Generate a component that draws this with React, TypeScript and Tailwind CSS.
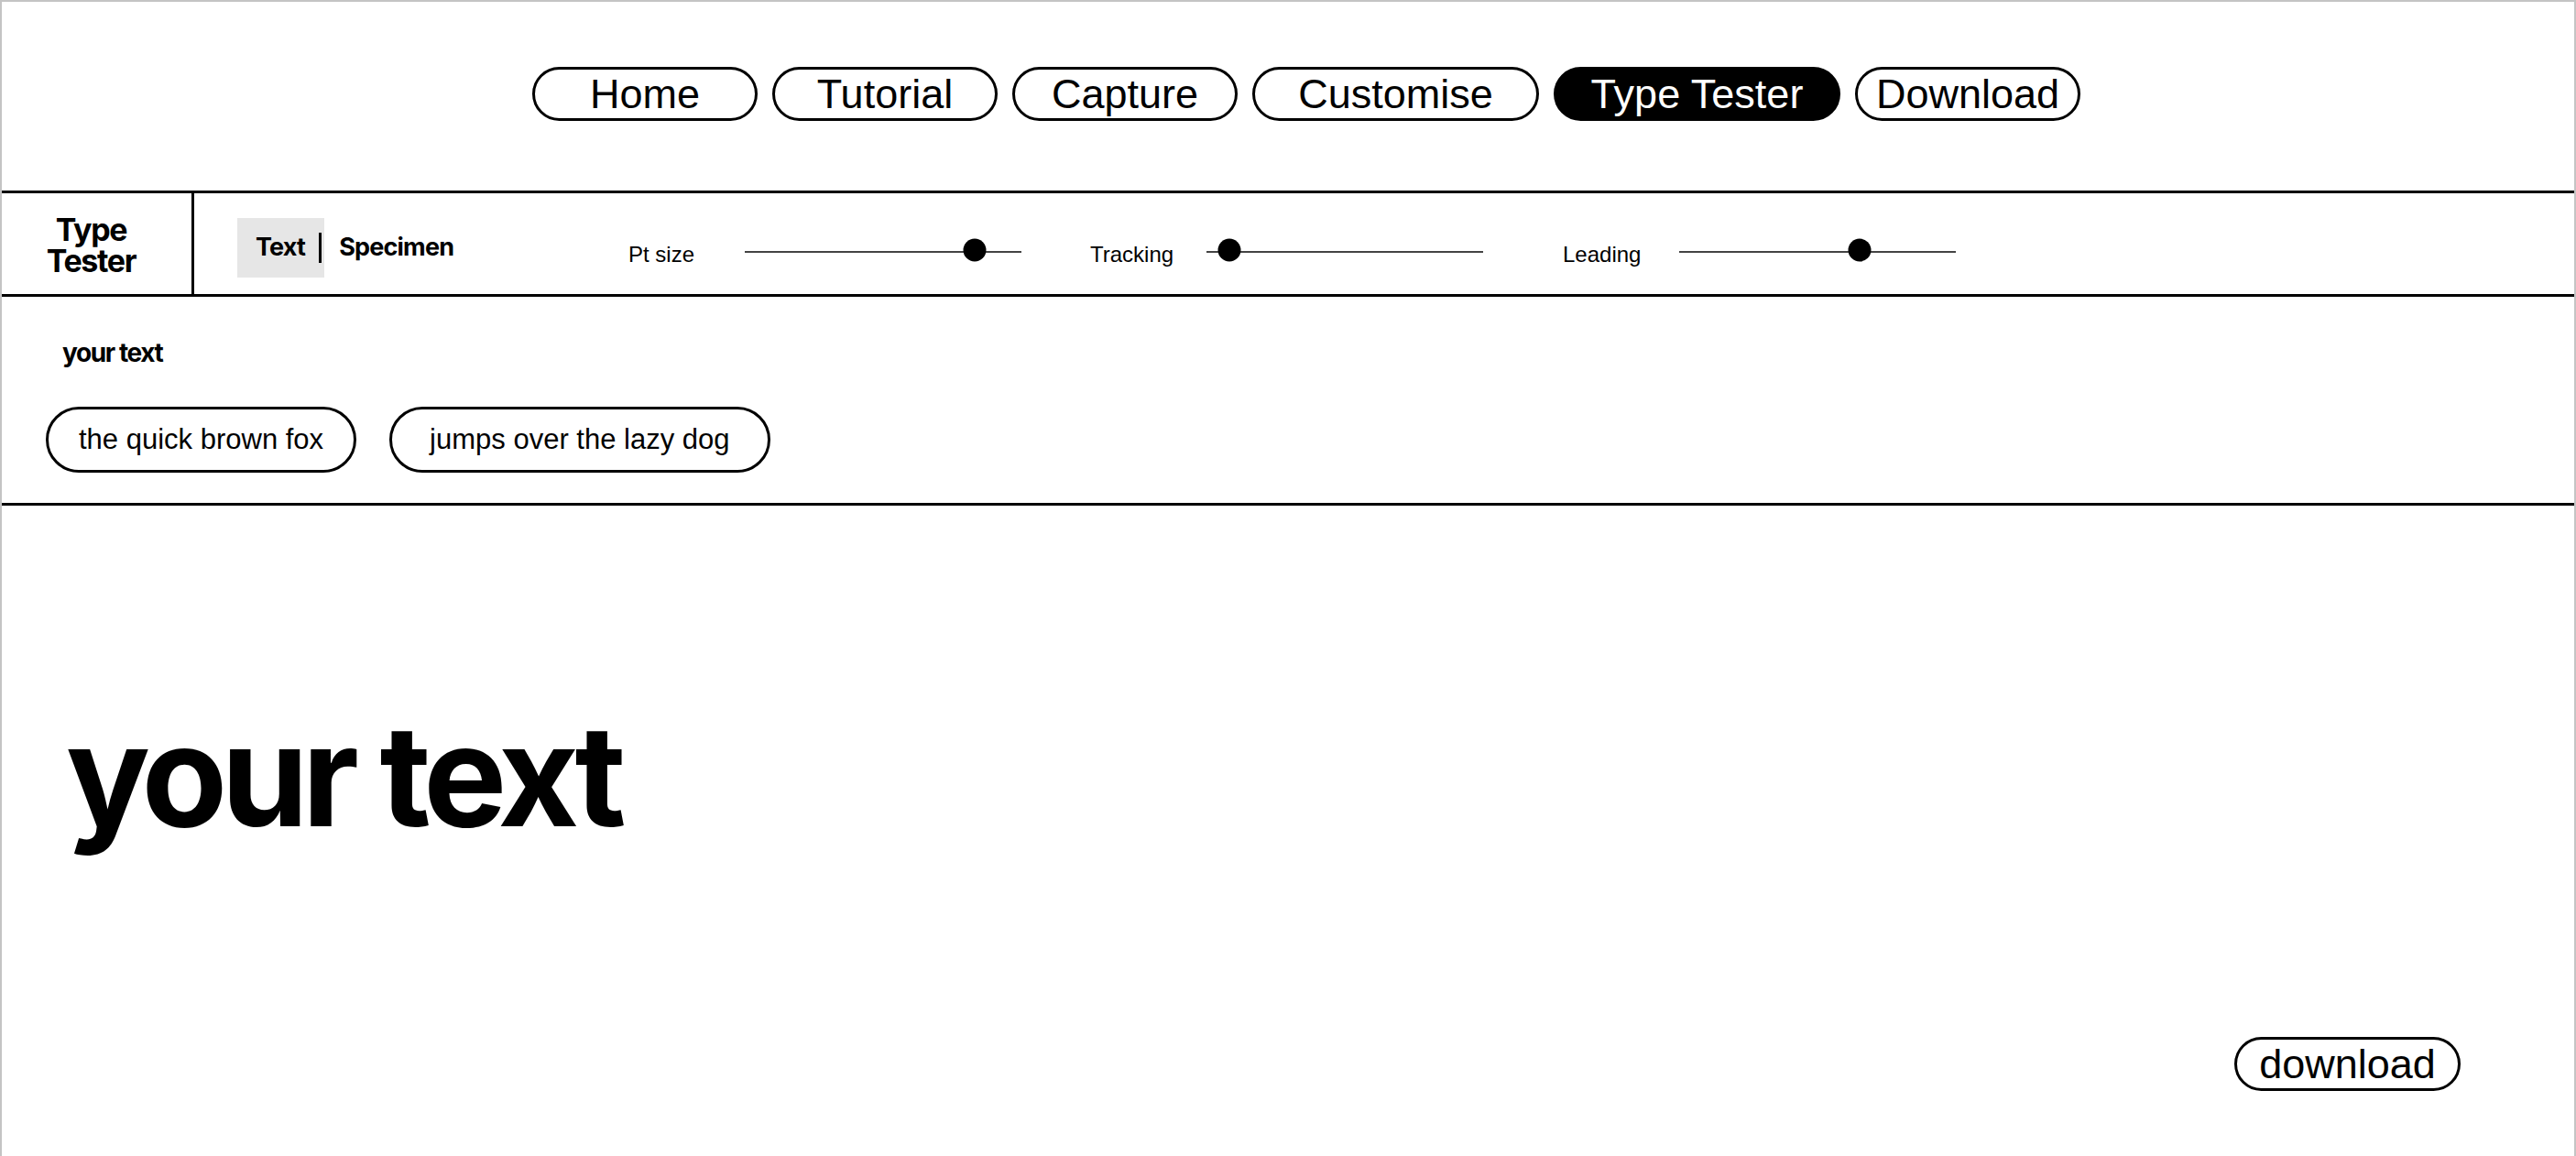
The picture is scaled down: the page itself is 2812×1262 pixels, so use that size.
import React from "react";

const navItems = [
  { label: "Home", wide: false },
  { label: "Tutorial", wide: false },
  { label: "Capture", wide: false },
  { label: "Customise", wide: true },
  { label: "Type Tester", wide: true, active: true },
  { label: "Download", wide: false },
];

const sliders = [
  { label: "Pt size", thumb: 251, gap: "ml-0" },
  { label: "Tracking", thumb: 25, gap: "ml-[75px]" },
  { label: "Leading", thumb: 197, gap: "ml-[87px]" },
];

function Slider({ label, thumb, gap }: { label: string; thumb: number; gap: string }) {
  return (
    <div className={`mt-[9px] flex items-center ${gap}`}>
      <span className="w-[127px] pt-[6px] text-[24px] leading-none font-['Liberation_Sans',Arial,sans-serif]">
        {label}
      </span>
      <div className="relative h-[2px] w-[302px] bg-[#444]">
        {/* thumb */}
        <div
          className="absolute top-1/2 h-[25px] w-[25px] -translate-x-1/2 -translate-y-[58%] rounded-full bg-black"
          style={{ left: thumb }}
        />
      </div>
    </div>
  );
}

export default function App() {
  return (
    <div className="flex h-screen flex-col overflow-hidden border-2 border-b-0 border-[#c4c4c4] bg-white text-black">
      {/* Top navigation */}
      <nav className="flex h-[209px] shrink-0 items-center justify-center gap-4 border-b-[3px] border-black pb-[5px] pl-[40px] font-['Liberation_Sans',Arial,sans-serif]">
        {navItems.map((item) => (
          <button
            key={item.label}
            className={`flex h-[59px] items-center justify-center rounded-full border-[3px] border-black text-[45px] leading-none ${
              item.wide ? "w-[313px]" : "w-[246px]"
            } ${item.active ? "bg-black text-white" : "bg-white text-black"}`}
          >
            {item.label}
          </button>
        ))}
      </nav>

      {/* Toolbar */}
      <div className="flex h-[113px] shrink-0 border-b-[3px] border-black font-['Inter',sans-serif]">
        <div className="flex w-[210px] shrink-0 items-center justify-center border-r-[3px] border-black pr-[12px] pt-[4px]">
          <h1 className="text-center text-[34px] font-bold leading-[34px] tracking-[-0.04em]">
            Type
            <br />
            Tester
          </h1>
        </div>
        <div className="flex items-center pl-[47px] pt-[8px]">
          <div className="flex w-[427px] items-center">
            <div className="flex h-[65px] items-center bg-[#e6e6e6] pl-[20px] pr-[3px]">
              <span className="text-[27px] font-bold tracking-[-0.03em]">Text</span>
              <span className="ml-[15px] h-[33px] w-[3px] bg-black" />
            </div>
            <span className="ml-[16px] text-[27px] font-bold tracking-[-0.03em]">Specimen</span>
          </div>
          {sliders.map((s) => (
            <Slider key={s.label} {...s} />
          ))}
        </div>
      </div>

      {/* Text presets */}
      <div className="h-[228px] shrink-0 border-b-[3px] border-black px-[48px] pt-[45px]">
        <p className="ml-[18px] font-['Inter',sans-serif] text-[28px] font-bold leading-[32px] tracking-[-0.05em]">
          your text
        </p>
        <div className="mt-[43px] flex gap-[36px] font-['Liberation_Sans',Arial,sans-serif]">
          <button className="flex h-[72px] items-center rounded-full border-[3px] border-black px-[33px] text-[31px]">
            the quick brown fox
          </button>
          <button className="flex h-[72px] items-center rounded-full border-[3px] border-black px-[41px] text-[31px]">
            jumps over the lazy dog
          </button>
        </div>
      </div>

      {/* Preview */}
      <div className="flex flex-1 flex-col">
        <p className="mt-[218px] pl-[70px] font-['Inter',sans-serif] text-[153px] font-bold leading-none tracking-[-0.045em]">
          your text
        </p>
        <div className="mt-auto flex justify-end pb-[71px] pr-[124px]">
          <button className="flex h-[59px] w-[247px] items-center justify-center rounded-full border-[3px] border-black font-['Liberation_Sans',Arial,sans-serif] text-[45px] leading-none">
            download
          </button>
        </div>
      </div>
    </div>
  );
}
